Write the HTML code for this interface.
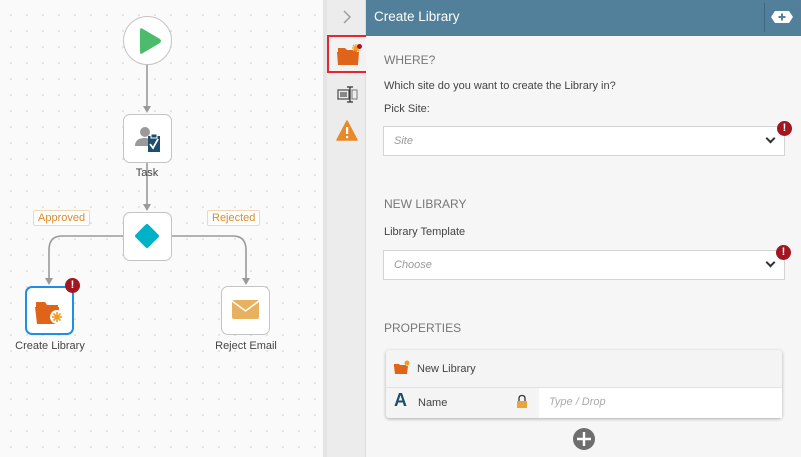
<!DOCTYPE html>
<html><head><meta charset="utf-8"><style>
*{box-sizing:border-box;margin:0;padding:0}
body{width:801px;height:457px;overflow:hidden;font-family:"Liberation Sans",sans-serif;position:relative;background:#fff}
.canvas{position:absolute;left:0;top:0;width:323px;height:457px;background-color:#fafafa;background-image:radial-gradient(circle,#d0d0d0 0.7px,transparent 0.9px);background-size:16px 16px;background-position:3px 7px}
.strip{position:absolute;left:323px;top:0;width:4px;height:457px;background:#e4e4e4}
.side{position:absolute;left:327px;top:0;width:39px;height:457px;background:#ececec;border-right:1px solid #dcdcdc}
.hdr{position:absolute;left:366px;top:0;width:435px;height:36px;background:#527f99;color:#fff;font-size:13.5px;padding:9px 0 0 8px}
.content{position:absolute;left:366px;top:36px;width:435px;height:421px;background:#f6f6f6}
.node{position:absolute;width:49px;height:49px;background:#fff;border:1px solid #c4c4c4;border-radius:7px}
.lbl{position:absolute;font-size:11px;color:#444;text-align:center;width:100px}
.tag{position:absolute;font-size:11px;color:#d98b2b;border:1px solid #f3d7b3;background:#fff;padding:1px 4px;border-radius:2px}
.sec{position:absolute;left:18px;font-size:12px;color:#777}
.txt{position:absolute;left:18px;font-size:11px;color:#444}
.sel{position:absolute;left:17px;width:402px;height:30px;background:#fff;border:1px solid #d4d4d4;font-size:11px;font-style:italic;color:#999;padding:8px 0 0 10px}
.chev{position:absolute;right:10px;top:8px;width:7px;height:7px;border-right:2px solid #333;border-bottom:2px solid #333;transform:rotate(45deg)}
.err{position:absolute;width:15px;height:15px;border-radius:50%;background:#a3151f;color:#fff;font-size:11px;font-weight:bold;text-align:center;line-height:15px}
</style></head><body>
<div class="canvas">
<svg width="323" height="457" style="position:absolute;left:0;top:0">
<g stroke="#9a9a9a" stroke-width="1.6" fill="none">
<line x1="147" y1="64" x2="147" y2="108"/>
<line x1="147" y1="163" x2="147" y2="206"/>
<path d="M123 236 H62 Q49 236 49 250 V280"/>
<path d="M172 236 H233 Q246 236 246 250 V280"/>
</g>
<g fill="#9a9a9a">
<path d="M143 106 L151 106 L147 113Z"/>
<path d="M143 204 L151 204 L147 211Z"/>
<path d="M45 278 L53 278 L49 285Z"/>
<path d="M242 278 L250 278 L246 285Z"/>
</g>
</svg>
<div style="position:absolute;left:123px;top:16px;width:49px;height:49px;border-radius:50%;background:#fff;border:1px solid #c4c4c4"></div>
<svg style="position:absolute;left:137px;top:27px" width="26" height="28"><path d="M3 3 Q3 0 6 2 L23 12 Q25 14 23 16 L6 26 Q3 28 3 25Z" fill="#4dbb6c"/></svg>
<div class="node" style="left:123px;top:114px"></div>
<svg style="position:absolute;left:133px;top:124px" width="30" height="30"><circle cx="12" cy="8" r="5" fill="#9a9a9a"/><path d="M2 22 Q2 14 12 14 Q16 14 17 16 V22Z" fill="#9a9a9a"/><rect x="15" y="12" width="12" height="16" fill="#1e4e6b"/><rect x="18" y="10" width="6" height="4" fill="#1e4e6b" stroke="#fff" stroke-width="1"/><path d="M17 20 L20 24 L25 15" stroke="#fff" stroke-width="1.8" fill="none"/></svg>
<div class="lbl" style="left:97px;top:167px">Task</div>
<div class="node" style="left:123px;top:212px"></div>
<div style="position:absolute;left:138px;top:227px;width:18px;height:18px;background:#00b2c8;transform:rotate(45deg);border-radius:2px"></div>
<div class="tag" style="left:33px;top:210px">Approved</div>
<div class="tag" style="left:207px;top:210px">Rejected</div>
<div class="node" style="left:25px;top:286px;border:2px solid #1e8ee6"></div>
<svg style="position:absolute;left:34px;top:296px" width="32" height="30"><path d="M2 6 H11 L13 9 H24 V11 H2Z" fill="#e0631a"/><path d="M1 11 H25 L24 28 H3Z" fill="#e0631a"/><circle cx="23" cy="21" r="7" fill="#fff"/><g stroke="#f29b1f" stroke-width="1.6"><line x1="23" y1="16" x2="23" y2="26"/><line x1="18" y1="21" x2="28" y2="21"/><line x1="19.5" y1="17.5" x2="26.5" y2="24.5"/><line x1="26.5" y1="17.5" x2="19.5" y2="24.5"/></g></svg>
<div class="err" style="left:65px;top:278px">!</div>
<div class="lbl" style="left:0px;top:340px">Create Library</div>
<div class="node" style="left:221px;top:286px"></div>
<svg style="position:absolute;left:232px;top:300px" width="28" height="20"><rect x="0" y="0" width="27" height="19" rx="2" fill="#e8b15f"/><path d="M0 1 L13.5 11 L27 1" stroke="#fff" stroke-width="1.5" fill="none"/></svg>
<div class="lbl" style="left:196px;top:340px">Reject Email</div>
</div>
<div class="strip"></div>
<div class="side">
<svg style="position:absolute;left:15px;top:9px" width="10" height="16"><path d="M2 2 L8 8 L2 14" stroke="#999" stroke-width="1.4" fill="none"/></svg>
<div style="position:absolute;left:0px;top:35px;width:42px;height:38px;border:2px solid #e8252f;background:#f2f2f2"></div>
<svg style="position:absolute;left:10px;top:43px" width="24" height="24"><path d="M1 5 H8 L10 7 H20 V9 H1Z" fill="#e0631a"/><path d="M0 9 H22 L21 22 H1Z" fill="#e0631a"/><g stroke="#f29b1f" stroke-width="1.3"><line x1="19" y1="1" x2="19" y2="9"/><line x1="15" y1="5" x2="23" y2="5"/><line x1="16" y1="2" x2="22" y2="8"/><line x1="22" y1="2" x2="16" y2="8"/></g></svg>
<div style="position:absolute;left:30px;top:44px;width:5px;height:5px;border-radius:50%;background:#a3151f"></div>
<svg style="position:absolute;left:10px;top:85px" width="22" height="20"><rect x="1" y="5" width="11" height="9" fill="none" stroke="#555" stroke-width="1.3"/><rect x="3" y="7" width="7" height="5" fill="#888"/><rect x="15" y="5" width="5" height="9" fill="none" stroke="#777" stroke-width="1"/><path d="M13 2 V17 M10 2 H16 M10 17 H16" stroke="#333" stroke-width="1.3"/></svg>
<svg style="position:absolute;left:9px;top:120px" width="22" height="22"><path d="M11 1 L21 20 H1Z" fill="#e8892a" stroke="#e8892a" stroke-linejoin="round" stroke-width="1.5"/><rect x="10" y="7" width="2.2" height="7" fill="#fff"/><rect x="10" y="16" width="2.2" height="2.2" fill="#fff"/></svg>
</div>
<div class="hdr">Create Library
<div style="position:absolute;left:398px;top:3px;width:1px;height:29px;background:#3e6680"></div>
<svg style="position:absolute;left:404px;top:10px" width="24" height="14"><path d="M5 1 H19 L23 7 L19 13 H5 L1 7Z" fill="#fff"/><path d="M12 3.5 V10.5 M8.5 7 H15.5" stroke="#527f99" stroke-width="2"/></svg>
</div>
<div class="content">
<div class="sec" style="top:17px">WHERE?</div>
<div class="txt" style="top:44px">Which site do you want to create the Library in?</div>
<div class="txt" style="top:67px">Pick Site:</div>
<div class="sel" style="top:90px">Site<div class="chev"></div></div>
<div class="err" style="left:411px;top:85px">!</div>
<div class="sec" style="top:161px">NEW LIBRARY</div>
<div class="txt" style="top:190px">Library Template</div>
<div class="sel" style="top:214px">Choose<div class="chev"></div></div>
<div class="err" style="left:410px;top:209px">!</div>
<div class="sec" style="top:285px">PROPERTIES</div>
<div style="position:absolute;left:20px;top:314px;width:396px;height:68px;background:#f4f4f4;border-radius:3px;box-shadow:0 1px 3px rgba(0,0,0,.3)">
<svg style="position:absolute;left:8px;top:10px" width="16" height="14"><path d="M0 4 H5 L6 5 H12 V6 H0Z" fill="#e0631a"/><path d="M0 6 H14 L13 14 H1Z" fill="#e0631a"/><circle cx="13" cy="3" r="2.5" fill="#f29b1f"/></svg>
<div style="position:absolute;left:31px;top:13px;font-size:11px;color:#444">New Library</div>
<div style="position:absolute;left:0;top:37px;width:396px;height:1px;background:#e2e2e2"></div>
<div style="position:absolute;left:153px;top:38px;width:243px;height:30px;background:#fff"></div>
<div style="position:absolute;left:8px;top:40px;font-size:18px;font-weight:bold;color:#1e4e6b">A</div>
<div style="position:absolute;left:32px;top:47px;font-size:11px;color:#444">Name</div>
<svg style="position:absolute;left:130px;top:44px" width="12" height="15"><path d="M3 8 V4.5 Q3 1.5 6 1.5 Q9 1.5 9 4.5 V8" stroke="#333" stroke-width="1.3" fill="none"/><rect x="1" y="7" width="10" height="7" fill="#e8a63a"/></svg>
<div style="position:absolute;left:163px;top:46px;font-size:11px;font-style:italic;color:#aaa">Type / Drop</div>
</div>
<div style="position:absolute;left:207px;top:392px;width:22px;height:22px;border-radius:50%;background:#6e6e6e"></div>
<svg style="position:absolute;left:207px;top:392px" width="22" height="22"><path d="M11 4 V18 M4 11 H18" stroke="#fff" stroke-width="2.4"/></svg>
</div>
</body></html>
